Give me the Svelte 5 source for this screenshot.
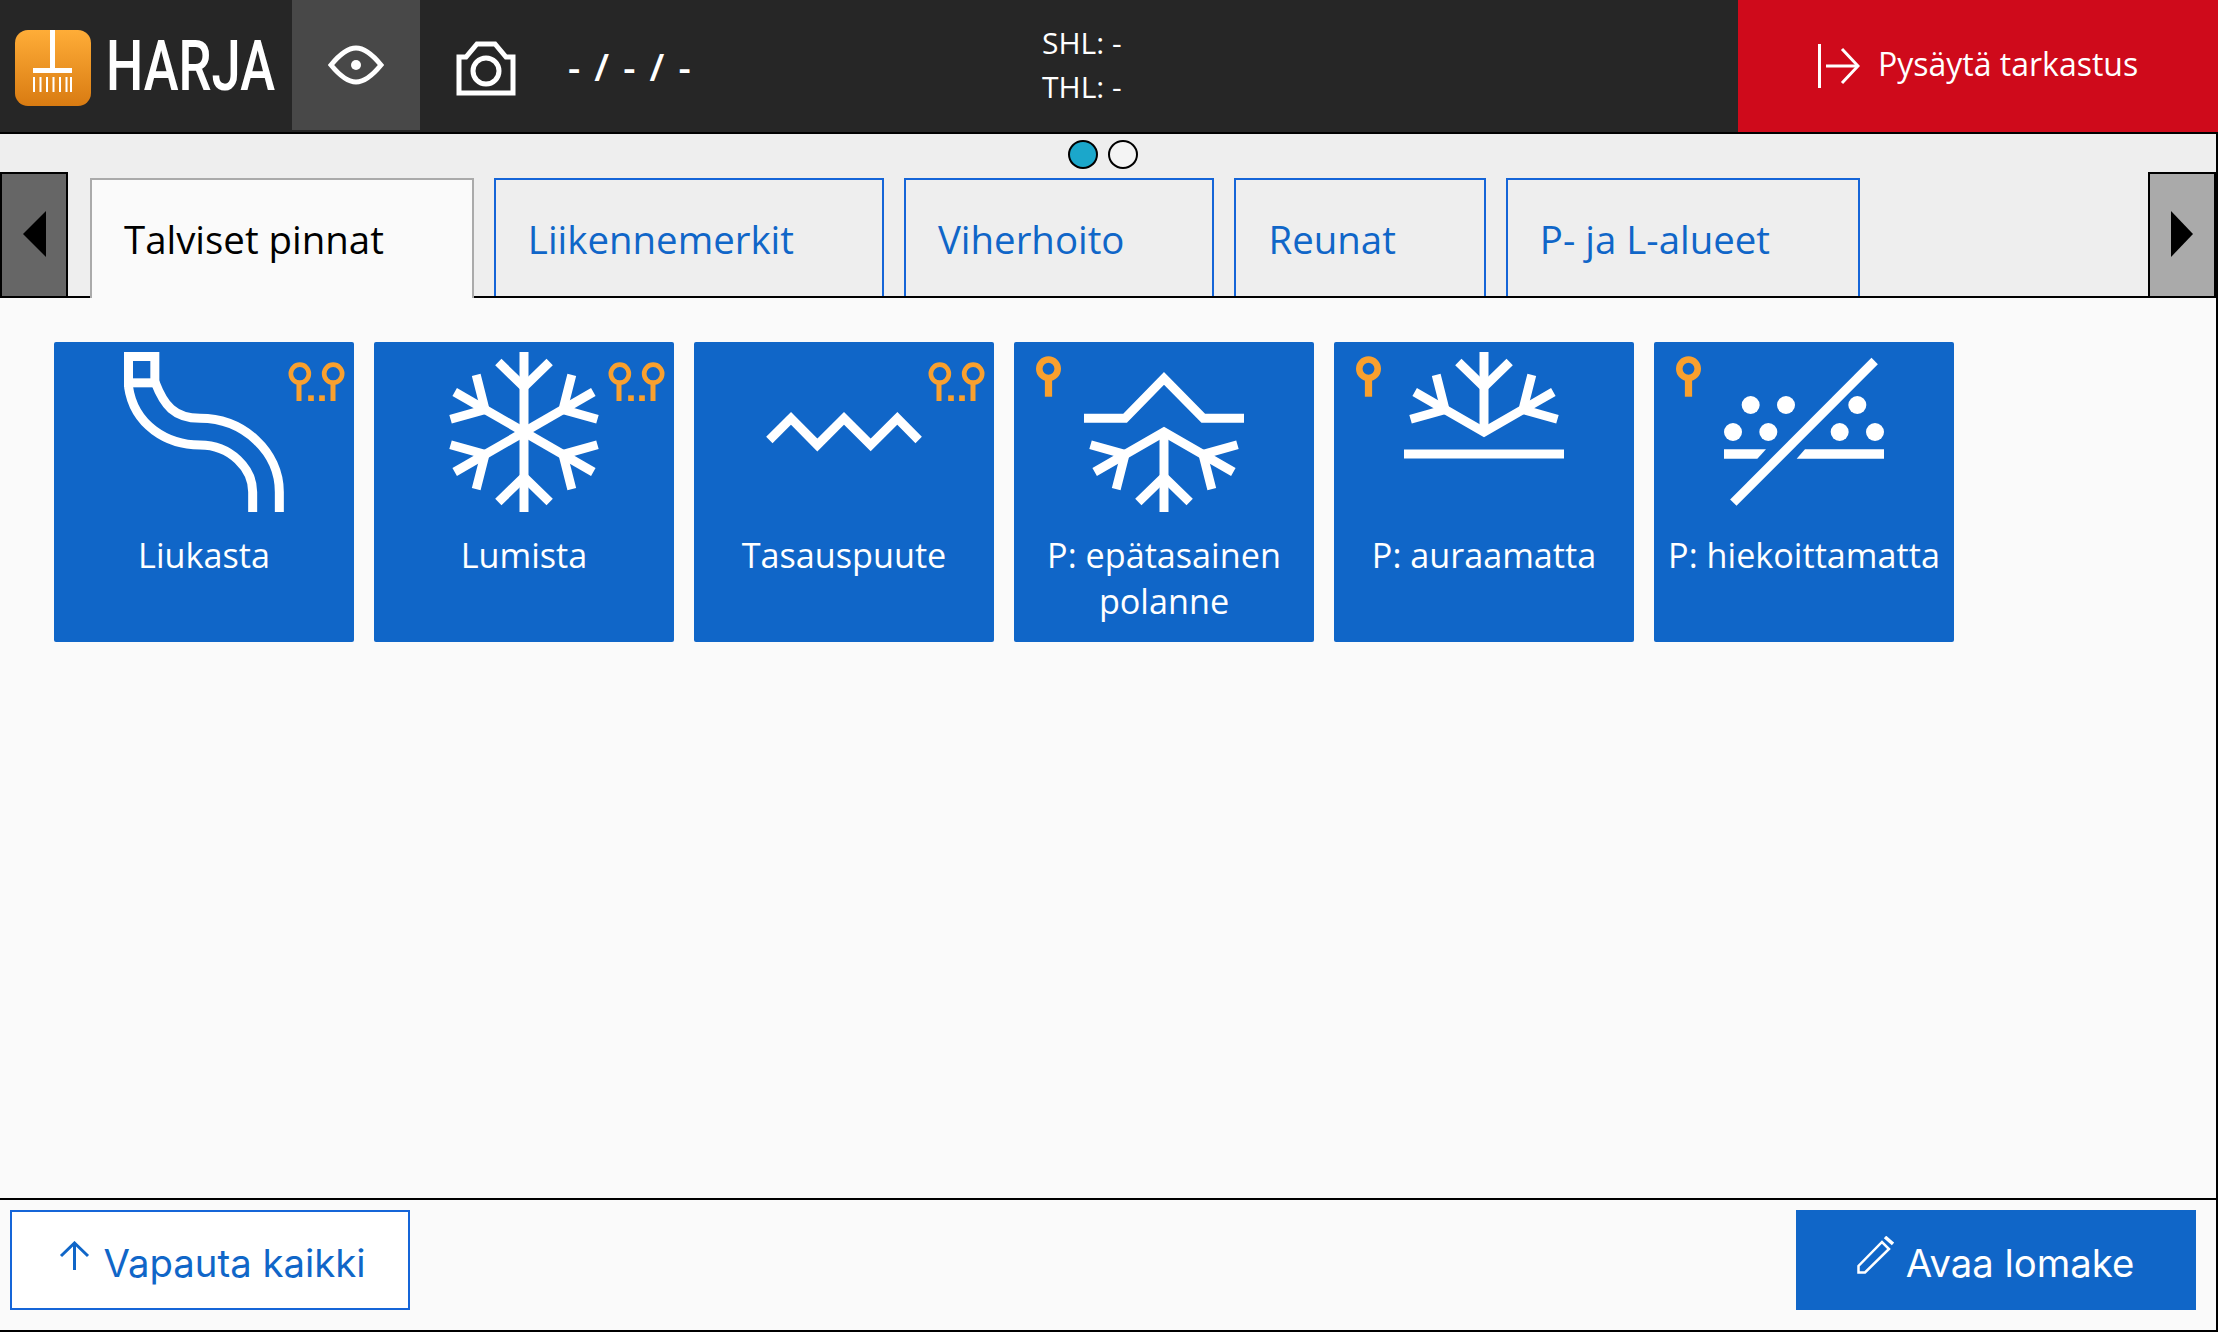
<script>
	const tabs = ['Talviset pinnat', 'Liikennemerkit', 'Viherhoito', 'Reunat', 'P- ja L-alueet'];

	const tiles = [
		{ label: 'Liukasta', icon: 'road', keys: 2 },
		{ label: 'Lumista', icon: 'snow', keys: 2 },
		{ label: 'Tasauspuute', icon: 'zigzag', keys: 2 },
		{ label: 'P: epätasainen polanne', icon: 'rut', keys: 1 },
		{ label: 'P: auraamatta', icon: 'unplowed', keys: 1 },
		{ label: 'P: hiekoittamatta', icon: 'unsanded', keys: 1 }
	];

	const bristles = [18, 24.5, 31, 37.5, 44, 50.5, 55];
	const sand = [[80, 159], [186, 159], [400, 159], [27, 240], [133, 240], [347, 240], [453, 240]];
</script>

{#snippet arm(rotation)}
	<g transform="rotate({rotation} 240 240)">
		<line x1="240" y1="240" x2="240" y2="0" />
		<polyline points="163,30 240,105 317,30" />
	</g>
{/snippet}

{#snippet branch(rotation)}
	<g transform="rotate({rotation} 240 240)">
		<polyline points="163,30 240,105 317,30" />
	</g>
{/snippet}

<div class="app">
	<header class="topbar">
		<div class="logo">
			<svg class="logo-mark" viewBox="0 0 76 76">
				<defs>
					<linearGradient id="logo-fill" x1="0" y1="0" x2="0" y2="1">
						<stop offset="0" stop-color="#ffad38" />
						<stop offset="1" stop-color="#d97b12" />
					</linearGradient>
				</defs>
				<rect width="76" height="76" rx="13" fill="url(#logo-fill)" />
				<rect x="35" width="5" height="39" fill="#fff" />
				<rect x="18" y="38" width="39" height="5" fill="#fff" />
				{#each bristles as x}
					<rect {x} y="47" width="2" height="15" fill="#fff" />
				{/each}
			</svg>
			<span class="logo-text"><span>HARJA</span></span>
		</div>

		<div class="eye">
			<svg width="56" height="40" viewBox="0 0 56 40" fill="none" stroke="#fff" stroke-width="5">
				<path d="M3 20C12 9 20 3 28 3S44 9 53 20C44 31 36 37 28 37S12 31 3 20Z" />
				<circle cx="28" cy="20" r="5" fill="#fff" stroke="none" />
			</svg>
		</div>

		<svg class="camera" width="60" height="55" viewBox="0 0 60 55" fill="none" stroke="#fff" stroke-width="5">
			<path d="M3 52V16H10L21 3H39L50 16H57V52Z" />
			<circle cx="30" cy="30" r="13" />
		</svg>

		<div class="coords">- / - / -</div>

		<div class="speed">
			<div>SHL: -</div>
			<div>THL: -</div>
		</div>

		<button class="stop">
			<svg width="42" height="44" viewBox="0 0 42 44" fill="none" stroke="#fff" stroke-width="3">
				<line x1="1.5" y1="0" x2="1.5" y2="44" />
				<line x1="8" y1="22" x2="40" y2="22" />
				<polyline points="24,5 40,22 24,39" />
			</svg>
			<span>Pysäytä tarkastus</span>
		</button>
	</header>

	<main class="main">
		<div class="tabbar">
			<div class="dots">
				<span class="dot on"></span>
				<span class="dot"></span>
			</div>
			<div class="tabrow">
				<button class="arrow left" aria-label="Edellinen"></button>
				<div class="tabs">
					{#each tabs as tab, i}
						<div class="tab" class:active={i === 0}>{tab}</div>
					{/each}
				</div>
				<button class="arrow right" aria-label="Seuraava"></button>
			</div>
		</div>

		<section class="content">
			{#each tiles as tile}
				<div class="tile">
					{#if tile.keys === 2}
						<svg class="keys" viewBox="0 0 170 117" fill="none" stroke="#f9a02e" stroke-width="14">
							<circle cx="35" cy="35" r="27" />
							<circle cx="135" cy="35" r="27" />
							<g fill="#f9a02e" stroke="none">
								<rect x="25" y="62" width="15" height="55" />
								<rect x="127" y="62" width="15" height="55" />
								<rect x="60" y="100" width="17" height="17" />
								<rect x="93" y="100" width="17" height="17" />
							</g>
						</svg>
					{:else}
						<svg class="key" viewBox="0 0 76 123" fill="none" stroke="#f9a02e" stroke-width="20">
							<circle cx="38" cy="38" r="28" />
							<rect x="27" y="70" width="22" height="53" fill="#f9a02e" stroke="none" />
						</svg>
					{/if}

					<svg class="glyph" viewBox="0 0 480 480" fill="none" stroke="#fff" stroke-width="27">
						{#if tile.icon === 'road'}
							<rect x="13.5" y="13.5" width="79" height="79" />
							<path d="M13.5 104C30 220 130 279 228 279C320 279 386 350 386 420V480" />
							<path d="M93 90C120 160 150 199 228 199C360 199 466 300 466 420V480" />
						{:else if tile.icon === 'snow'}
							{#each [0, 60, 120, 180, 240, 300] as r}
								{@render arm(r)}
							{/each}
						{:else if tile.icon === 'zigzag'}
							<polyline points="16,264 81,199 160,279 240,199 320,279 400,199 464,264" />
						{:else if tile.icon === 'rut'}
							<polyline points="0,199 123,199 240,79 358,199 480,199" />
							<polyline points="32,360 240,240 448,360" />
							<line x1="240" y1="240" x2="240" y2="480" />
							{#each [120, 180, 240] as r}
								{@render branch(r)}
							{/each}
						{:else if tile.icon === 'unplowed'}
							<polyline points="32,120 240,240 448,120" />
							<line x1="240" y1="240" x2="240" y2="0" />
							{#each [0, 60, 300] as r}
								{@render branch(r)}
							{/each}
							<line x1="0" y1="306" x2="480" y2="306" />
						{:else}
							<line x1="452" y1="27" x2="28" y2="452" />
							<g fill="#fff" stroke="none">
								{#each sand as [cx, cy]}
									<circle {cx} {cy} r="27" />
								{/each}
								<polygon points="0,292 126,292 100,320 0,320" />
								<polygon points="243,292 480,292 480,320 218,320" />
							</g>
						{/if}
					</svg>
					<span class="label">{tile.label}</span>
				</div>
			{/each}
		</section>

		<footer class="footer">
			<button class="action release">
				<svg width="31" height="29" viewBox="0 0 31 29" fill="none" stroke="currentColor" stroke-width="3">
					<line x1="15.5" y1="3" x2="15.5" y2="29" />
					<polyline points="2,15 15.5,2 29,15" />
				</svg>
				Vapauta kaikki
			</button>
			<button class="action open">
				<svg width="37" height="38" viewBox="0 0 37 38" fill="none" stroke="currentColor" stroke-width="2.5">
					<path d="M1.5 36.5V30L25 6L32 13L8 36.5Z" />
					<line x1="28" y1="1" x2="36" y2="8" stroke-width="3.5" />
				</svg>
				Avaa lomake
			</button>
		</footer>
	</main>
</div>

<style>
	:global(body) {
		margin: 0;
		background: #fafafa;
	}

	.app {
		display: flex;
		flex-direction: column;
		height: 1332px;
		font-family: 'Open Sans', 'Liberation Sans', sans-serif;
		overflow: hidden;
	}

	/* Top bar */
	.topbar {
		display: flex;
		align-items: center;
		height: 132px;
		flex: none;
		background: #262626;
		color: #fff;
		border-bottom: 2px solid #000;
	}

	.logo {
		display: flex;
		align-items: center;
		width: 292px;
		padding-left: 15px;
		box-sizing: border-box;
	}

	.logo-mark {
		width: 76px;
		height: 76px;
		flex: none;
		margin-top: 4px;
	}

	.logo-text {
		display: block;
		width: 168px;
		margin-left: 15px;
		font-family: Roboto, sans-serif;
		font-size: 70px;
		font-weight: 500;
		line-height: 1;
	}

	.logo-text span {
		display: inline-block;
		transform: scaleX(0.75);
		transform-origin: left center;
	}

	.eye {
		display: flex;
		align-items: center;
		justify-content: center;
		width: 128px;
		height: 130px;
		align-self: flex-start;
		background: #484848;
	}

	.camera {
		margin-left: 36px;
		margin-top: 5px;
	}

	.coords {
		margin-left: 52px;
		width: 200px;
		font-size: 38px;
		font-weight: 600;
		letter-spacing: 2.1px;
		white-space: nowrap;
	}

	.speed {
		margin-left: 274px;
		margin-top: -2px;
		font-size: 30px;
		line-height: 44px;
	}

	.stop {
		display: flex;
		align-items: center;
		gap: 18px;
		height: 132px;
		margin-left: auto;
		width: 480px;
		padding: 0 0 0 80px;
		background: #cf0a1b;
		border: 0;
		color: #fff;
		font: inherit;
		font-size: 32px;
		box-sizing: border-box;
	}

	.stop span {
		padding-bottom: 5px;
	}

	/* Tabs */
	.main {
		flex: 1;
		display: flex;
		flex-direction: column;
		min-height: 0;
		border-right: 2px solid #000;
		border-bottom: 2px solid #000;
	}

	.tabbar {
		background: #eee;
		border-bottom: 2px solid #000;
		flex: none;
	}

	.dots {
		display: flex;
		justify-content: center;
		gap: 10px;
		height: 32px;
		padding: 6px 10px 0 0;
	}

	.dot {
		width: 30px;
		height: 29px;
		box-sizing: border-box;
		border: 2px solid #000;
		border-radius: 50%;
		background: #f4f4f4;
	}

	.dot.on {
		background: #1ba7cb;
	}

	.tabrow {
		display: flex;
		align-items: flex-end;
		height: 124px;
	}

	.arrow {
		position: relative;
		width: 68px;
		height: 124px;
		flex: none;
		padding: 0;
		border: 2px solid #000;
		border-bottom: 0;
		box-sizing: border-box;
	}

	.arrow.left {
		background: #666;
	}

	.arrow.right {
		background: #aaa;
	}

	.arrow::after {
		content: '';
		position: absolute;
		top: 37px;
		width: 0;
		height: 0;
		border-top: 23px solid transparent;
		border-bottom: 23px solid transparent;
	}

	.arrow.left::after {
		left: 21px;
		border-right: 23px solid #000;
	}

	.arrow.right::after {
		left: 21px;
		border-left: 22px solid #000;
	}

	.tabs {
		flex: 1;
		display: flex;
		gap: 20px;
		padding-left: 22px;
	}

	.tab {
		height: 118px;
		box-sizing: border-box;
		padding: 2px 88px 0 32px;
		display: flex;
		align-items: center;
		border: 2px solid #1565d8;
		border-bottom: 0;
		color: #1066c8;
		font-size: 38.4px;
		white-space: nowrap;
	}

	.tab.active {
		height: 120px;
		margin-bottom: -2px;
		padding-bottom: 2px;
		background: #fafafa;
		border-color: #aaa;
		color: #000;
		position: relative;
	}

	/* Tiles */
	.content {
		flex: 1;
		display: flex;
		align-items: flex-start;
		gap: 20px;
		padding: 44px 0 0 54px;
		background: #fafafa;
	}

	.tile {
		position: relative;
		width: 300px;
		height: 300px;
		flex: none;
		box-sizing: border-box;
		padding: 10px 4px 0;
		display: flex;
		flex-direction: column;
		align-items: center;
		background: #1066c8;
		border-radius: 2px;
		color: #fff;
	}

	.glyph {
		width: 160px;
		height: 160px;
		flex: none;
	}

	.label {
		margin-top: 20px;
		font-size: 34.2px;
		font-weight: 500;
		line-height: 46px;
		text-align: center;
	}

	.keys {
		position: absolute;
		top: 20px;
		left: 234px;
		width: 57px;
		height: 39px;
	}

	.key {
		position: absolute;
		top: 14px;
		left: 22px;
		width: 25px;
		height: 41px;
	}

	/* Footer */
	.footer {
		display: flex;
		justify-content: space-between;
		align-items: flex-start;
		height: 132px;
		flex: none;
		box-sizing: border-box;
		padding: 10px 20px 0 10px;
		border-top: 2px solid #000;
		background: #fafafa;
	}

	.action {
		display: flex;
		align-items: center;
		justify-content: center;
		width: 400px;
		height: 100px;
		font-family: Inter, 'Liberation Sans', sans-serif;
		font-size: 38.3px;
		box-sizing: border-box;
	}

	.action svg {
		margin-top: -15px;
	}

	.release {
		gap: 13px;
		padding: 5px 0 0 5px;
		background: #fff;
		border: 2px solid #1565d8;
		color: #1066c8;
	}

	.open {
		gap: 12px;
		padding: 5px 1px 0 0;
		background: #1066c8;
		border: 0;
		color: #fff;
	}
</style>
